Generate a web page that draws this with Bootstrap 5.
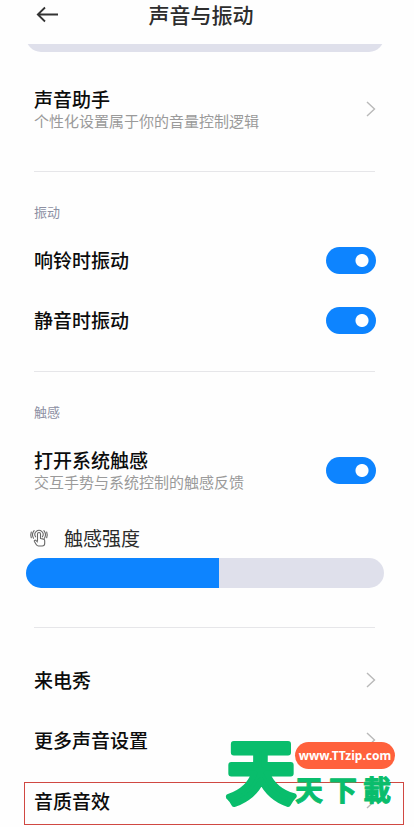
<!DOCTYPE html>
<html lang="zh-CN">
<head>
<meta charset="utf-8">
<meta name="viewport" content="width=device-width, initial-scale=1">
<title>声音与振动</title>
<link href="https://cdn.jsdelivr.net/npm/bootstrap@5.3.0/dist/css/bootstrap.min.css" rel="stylesheet">
<script src="https://cdn.jsdelivr.net/npm/bootstrap@5.3.0/dist/js/bootstrap.bundle.min.js" defer></script>
<style>
body{font-family:"Noto Sans CJK SC",sans-serif;background:#fefefe;color:#0c0c0c}
.topbar{height:44px;padding:0 48px 0 36px}
.topbar .back{width:24px}
.topbar h1{font-size:21px;line-height:28px;font-weight:500;color:#2d2d2d}
.bar-tail{height:8px;margin:0 30px 0 26px}
.bar-tail div{height:30px;border-radius:15px;background:#dfe0eb}
.group{padding:0 38px 0 34px}
.group.assistant{padding-top:27px;padding-bottom:32px}
.group.vibration{padding-top:30px;padding-bottom:21px}
.group.touch{padding-top:30px;padding-bottom:39px}
.group.more{padding-top:22px}
.rule{height:1px;margin:0 39px 0 34px;background:#e6e6e9}
.group-name{font-size:13px;line-height:20px;font-weight:400;color:#8d90a3;margin:0 0 8px}
.touch .group-name{margin-bottom:18px}
.line{height:60px;color:inherit}
.name{font-size:19px;line-height:24px;font-weight:500}
.note{font-size:15px;line-height:20px;color:#9a9a9a}
.chev{width:10px;height:16px}
.form-check-input.toggle{width:50px;height:27px;margin:0;border:0;border-radius:14px;background-color:#dfe0eb;background-image:radial-gradient(circle at 14px 50%,#fff 6px,transparent 7px);background-size:100% 100%}
.form-check-input.toggle:checked[type=checkbox]{background-color:#0d84ff;background-image:radial-gradient(circle at 36px 50%,#fff 6px,transparent 7px)}
.strength{margin-top:26px;color:#2b2b2b}
.strength .name{font-weight:400}
.strength svg{width:20px;height:20px;margin-left:-5px;margin-right:15px}
.level{-webkit-appearance:none;appearance:none;height:30px;border-radius:15px;background:linear-gradient(to right,#0d84ff 54%,#dfe0eb 54%)}
.level::-webkit-slider-thumb{-webkit-appearance:none;width:1px;height:30px;background:transparent}
.wide{margin:8px -8px 0}
.boxed{border:1px solid #d04842;margin:12px -28px 0 -10px;padding:0 27px 6px 9px;height:43px}
.logo{right:19px;top:730px;width:172px;height:82px;pointer-events:none}
.logo svg{overflow:visible}
.logo text{font-weight:700;fill:#09bd6c;stroke:#09bd6c;stroke-linejoin:round;text-anchor:middle}
.logo .big{font-size:68px;stroke-width:6px}
.logo .rest{font-size:28px;stroke-width:1px}
.logo-url{right:0;top:12px;width:100px;height:27px;background:#ff613c;font:bold 12px/27px "Noto Sans",sans-serif}
</style>
</head>
<body>
<div class="position-relative">
<header class="topbar d-flex align-items-start">
<button class="back btn p-0 border-0 lh-1" type="button" aria-label="返回"><svg width="24" height="24" viewBox="0 0 24 24" fill="none" stroke="#333" stroke-width="1.8"><path d="M22 14.500H2M9 7.500L1.800 14.500L9 21.500"/></svg></button>
<h1 class="flex-grow-1 text-center m-0 pe-4">声音与振动</h1>
</header>
<main>
<div class="bar-tail overflow-hidden d-flex align-items-end"><div class="w-100 flex-shrink-0"></div></div>
<section class="group assistant">
<a href="#" class="line d-flex align-items-center justify-content-between text-decoration-none"><span><span class="name d-block">声音助手</span><span class="note d-block">个性化设置属于你的音量控制逻辑</span></span><svg class="chev" viewBox="0 0 10 16" fill="none" stroke="#b9b9b9" stroke-width="1.4"><path d="M1 1L8.500 8L1 15"/></svg></a>
</section>
<div class="rule"></div>
<section class="group vibration">
<h2 class="group-name">振动</h2>
<div class="line d-flex align-items-center justify-content-between"><label class="name" for="ring">响铃时振动</label><input class="form-check-input toggle" type="checkbox" role="switch" id="ring" checked></div>
<div class="line d-flex align-items-center justify-content-between"><label class="name" for="silent">静音时振动</label><input class="form-check-input toggle" type="checkbox" role="switch" id="silent" checked></div>
</section>
<div class="rule"></div>
<section class="group touch">
<h2 class="group-name">触感</h2>
<div class="line d-flex align-items-center justify-content-between"><label for="haptic"><span class="name d-block">打开系统触感</span><span class="note d-block">交互手势与系统控制的触感反馈</span></label><input class="form-check-input toggle" type="checkbox" role="switch" id="haptic" checked></div>
<div class="strength d-flex align-items-center">
<svg viewBox="0 0 20 20" fill="none" stroke="#666" stroke-width="1.100" stroke-linecap="round" stroke-linejoin="round"><path d="M8.500 12.500V6a1.500 1.500 0 0 1 3 0v4.500l3 .6c.8.200 1.200.8 1.200 1.600v2.800c0 1.500-1 2.500-2.500 2.500H9.500c-1 0-1.600-.4-2.100-1.200l-2-3.300c-.5-.9.600-1.700 1.400-1.100l1.700 1.500M6.600 8.800a4.100 4.100 0 1 1 6.800 0M4.500 10.200a6.500 6.500 0 0 1 .6-7.500M15.500 10.200a6.500 6.500 0 0 0-.6-7.500M2.300 9.800a8.500 8.500 0 0 1 0-5.800M17.700 9.800a8.500 8.500 0 0 0 0-5.800"/></svg>
<label class="name" for="level">触感强度</label>
</div>
<div class="wide"><input class="level w-100 d-block m-0" type="range" id="level" min="0" max="100" value="54"></div>
</section>
<div class="rule"></div>
<nav class="group more">
<a href="#" class="line d-flex align-items-center justify-content-between text-decoration-none"><span class="name">来电秀</span><svg class="chev" viewBox="0 0 10 16" fill="none" stroke="#b9b9b9" stroke-width="1.4"><path d="M1 1L8.500 8L1 15"/></svg></a>
<a href="#" class="line d-flex align-items-center justify-content-between text-decoration-none"><span class="name">更多声音设置</span><svg class="chev" viewBox="0 0 10 16" fill="none" stroke="#b9b9b9" stroke-width="1.4"><path d="M1 1L8.500 8L1 15"/></svg></a>
<a href="#" class="line boxed d-flex align-items-center justify-content-between text-decoration-none"><span class="name">音质音效</span><svg class="chev" viewBox="0 0 10 16" fill="none" stroke="#b9b9b9" stroke-width="1.4"><path d="M1 1L8.500 8L1 15"/></svg></a>
</nav>
</main>
<div class="logo position-absolute"><svg width="172" height="82" viewBox="0 0 172 82"><text class="big" x="38" y="68">天</text><text class="rest" x="86" y="71">天</text><text class="rest" x="120" y="71">下</text><text class="rest" x="154" y="71">載</text></svg><span class="logo-url position-absolute rounded-pill text-white text-center">www.TTzip.com</span></div>
</div>
</body>
</html>
